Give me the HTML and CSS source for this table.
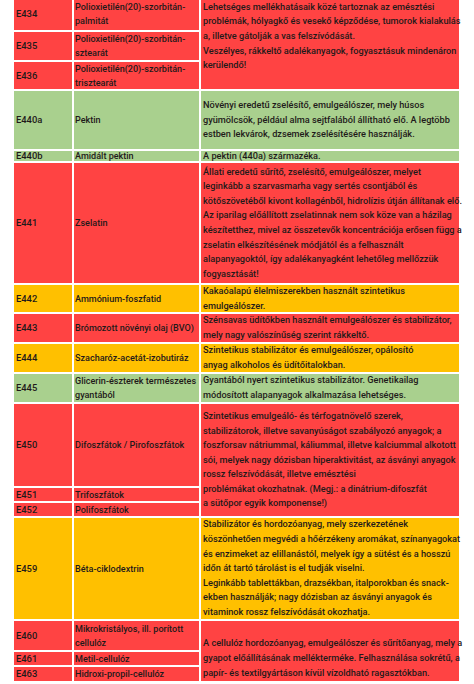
FILE: index.html
```html
<!DOCTYPE html>
<html lang="hu">
<head>
<meta charset="utf-8">
<title>E-számok</title>
<link rel="stylesheet" href="styles.css">
</head>
<body>
<div class="table">
  <div class="c red code">E434</div>
  <div class="c red name">Polioxietilén(20)-szorbitán-<br>palmitát</div>
  <div class="c red desc span3">Lehetséges mellékhatásaik közé tartoznak az emésztési<br>problémák, hólyagkő és vesekő képződése, tumorok kialakulás<br>a, illetve gátolják a vas felszívódását.<br>Veszélyes, rákkeltő adalékanyagok, fogyasztásuk mindenáron<br>kerülendő!<br>&nbsp;</div>
  <div class="c red code">E435</div>
  <div class="c red name">Polioxietilén(20)-szorbitán-<br>sztearát</div>
  <div class="c red code">E436</div>
  <div class="c red name">Polioxietilén(20)-szorbitán-<br>trisztearát</div>

  <div class="c green code">E440a</div>
  <div class="c green name">Pektin</div>
  <div class="c green desc">Növényi eredetű zselésítő, emulgeálószer, mely húsos<br>gyümölcsök, például alma sejtfalából állítható elő. A legtöbb<br>estben lekvárok, dzsemek zselésítésére használják.</div>

  <div class="c green code">E440b</div>
  <div class="c green name">Amidált pektin</div>
  <div class="c green desc">A pektin (440a) származéka.</div>

  <div class="c red code">E441</div>
  <div class="c red name">Zselatin</div>
  <div class="c red desc">Állati eredetű sűrítő, zselésítő, emulgeálószer, melyet<br>leginkább a szarvasmarha vagy sertés csontjából és<br>kötőszövetéből kivont kollagénből, hidrolízis útján állítanak elő.<br>Az iparilag előállított zselatinnak nem sok köze van a házilag<br>készítetthez, mivel az összetevők koncentrációja erősen függ a<br>zselatin elkészítésének módjától és a felhasznált<br>alapanyagoktól, így adalékanyagként lehetőleg mellőzzük<br>fogyasztását!</div>

  <div class="c orange code">E442</div>
  <div class="c orange name">Ammónium-foszfatid</div>
  <div class="c orange desc">Kakaóalapú élelmiszerekben használt szintetikus<br>emulgeálószer.</div>

  <div class="c red code">E443</div>
  <div class="c red name">Brómozott növényi olaj (BVO)</div>
  <div class="c red desc">Szénsavas üdítőkben használt emulgeálószer és stabilizátor,<br>mely nagy valószínűség szerint rákkeltő.</div>

  <div class="c orange code">E444</div>
  <div class="c orange name">Szacharóz-acetát-izobutiráz</div>
  <div class="c orange desc">Szintetikus stabilizátor és emulgeálószer, opálosító<br>anyag alkoholos és üdítőitalokban.</div>

  <div class="c green code">E445</div>
  <div class="c green name">Glicerin-észterek természetes<br>gyantából</div>
  <div class="c green desc">Gyantából nyert szintetikus stabilizátor. Genetikailag<br>módosított alapanyagok alkalmazása lehetséges.</div>

  <div class="c red code">E450</div>
  <div class="c red name">Difoszfátok / Pirofoszfátok</div>
  <div class="c red desc span3">Szintetikus emulgeáló- és térfogatnövelő szerek,<br>stabilizátorok, illetve savanyúságot szabályozó anyagok; a<br>foszforsav nátriummal, káliummal, illetve kalciummal alkotott<br>sói, melyek nagy dózisban hiperaktivitást, az ásványi anyagok<br>rossz felszívódását, illetve emésztési<br>problémákat okozhatnak. (Megj.: a dinátrium-difoszfát<br>a sütőpor egyik komponense!)</div>
  <div class="c red code">E451</div>
  <div class="c red name">Trifoszfátok</div>
  <div class="c red code">E452</div>
  <div class="c red name">Polifoszfátok</div>

  <div class="c orange code">E459</div>
  <div class="c orange name">Béta-ciklodextrin</div>
  <div class="c orange desc">Stabilizátor és hordozóanyag, mely szerkezetének<br>köszönhetően megvédi a hőérzékeny aromákat, színanyagokat<br>és enzimeket az elillanástól, melyek így a sütést és a hosszú<br>időn át tartó tárolást is el tudják viselni.<br>Leginkább tablettákban, drazsékban, italporokban és snack-<br>ekben használják; nagy dózisban az ásványi anyagok és<br>vitaminok rossz felszívódását okozhatja.</div>

  <div class="c red code">E460</div>
  <div class="c red name">Mikrokristályos, ill. porított<br>cellulóz</div>
  <div class="c red desc span3">&nbsp;<br>A cellulóz hordozóanyag, emulgeálószer és sűrítőanyag, mely a<br>gyapot előállításának mellékterméke. Felhasználása sokrétű, a<br>papír- és textilgyártáson kívül vízoldható ragasztókban.</div>
  <div class="c red code">E461</div>
  <div class="c red name">Metil-cellulóz</div>
  <div class="c red code">E463</div>
  <div class="c red name">Hidroxi-propil-cellulóz</div>
</div>
</body>
</html>
```

FILE: styles.css
```css
html, body {
  margin: 0;
  padding: 0;
  background: #ffffff;
}

body {
  font-family: Roboto, "Liberation Sans", sans-serif;
  font-weight: 500;
  font-size: 9.3px;
  color: #1f1a1a;
}

.table {
  display: grid;
  grid-template-columns: 58px 125px 258px;
  grid-template-rows:
    32px 28px 27px
    58px 10px 120px
    27px 28px 28px 28px
    82px 13px 13px
    101px
    29px 13px 14px;
  gap: 2px;
  margin: -2px 0 0 14px;
  width: 445px;
}

.c {
  display: flex;
  align-items: center;
  padding: 0 2px;
  line-height: 14px;
  white-space: nowrap;
}

.code {
  font-size: 9.4px;
}

.name {
  padding-left: 1px;
  font-size: 9.05px;
}

.desc {
  line-height: 14.6px;
  font-size: 9.2px;
}

.span3 {
  grid-row: span 3;
}

.red { background: #ff4343; }
.green { background: #a9d08e; }
.orange { background: #ffc000; }
```
